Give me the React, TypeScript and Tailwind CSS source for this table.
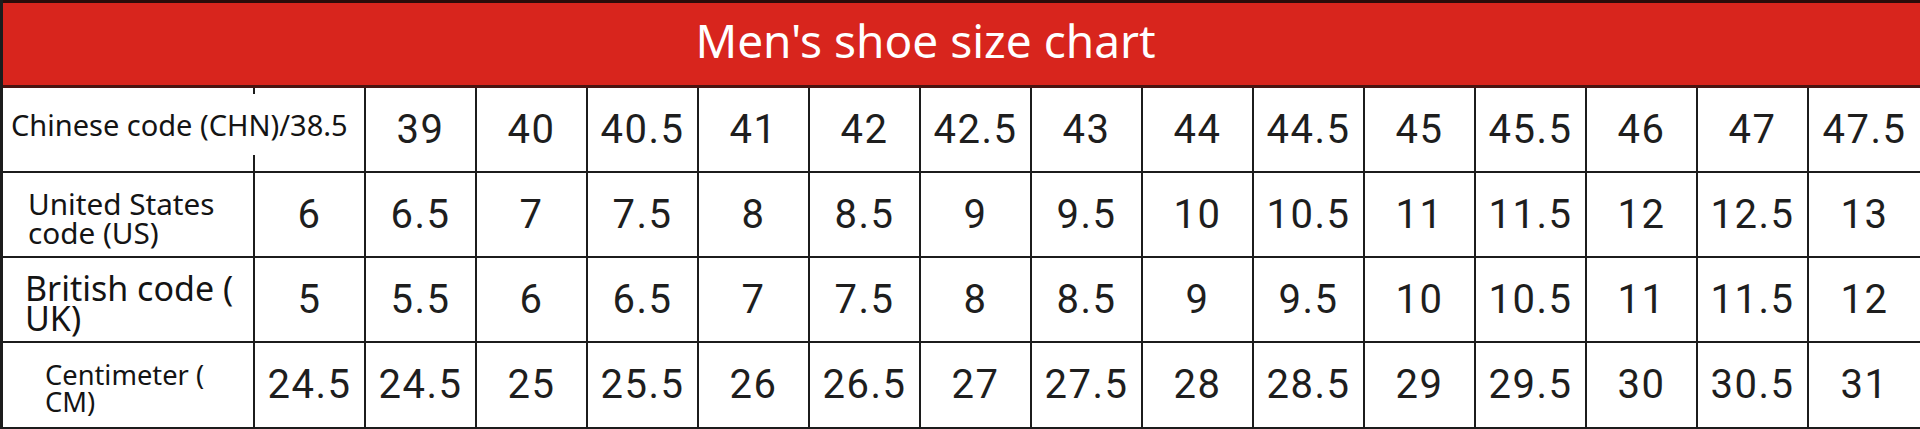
const chn = ["39", "40", "40.5", "41", "42", "42.5", "43", "44", "44.5", "45", "45.5", "46", "47", "47.5"];
const us = ["6", "6.5", "7", "7.5", "8", "8.5", "9", "9.5", "10", "10.5", "11", "11.5", "12", "12.5", "13"];
const uk = ["5", "5.5", "6", "6.5", "7", "7.5", "8", "8.5", "9", "9.5", "10", "10.5", "11", "11.5", "12"];
const cm = ["24.5", "24.5", "25", "25.5", "26", "26.5", "27", "27.5", "28", "28.5", "29", "29.5", "30", "30.5", "31"];

function Cell({ value, last }: { value: string; last: boolean }) {
  return (
    <div
      className={`flex items-center justify-center border-[#1c1c1c] font-['Roboto',sans-serif] text-[40px] tracking-[1.5px] text-[#1e1e1e] ${
        last ? "" : "border-r-2"
      }`}
    >
      {value}
    </div>
  );
}

function Row({
  label,
  values,
  height,
  lead,
}: {
  label: React.ReactNode;
  values: string[];
  height: string;
  lead?: boolean;
}) {
  return (
    <div className={`grid grid-cols-[252px_repeat(15,minmax(0,1fr))] border-b-2 border-[#1c1c1c] ${height}`}>
      {label}
      {lead && <div className="border-r-2 border-[#1c1c1c]" />}
      {values.map((v, i) => (
        <Cell key={i} value={v} last={i === values.length - 1} />
      ))}
    </div>
  );
}

export default function App() {
  return (
    <div className="flex h-[429px] w-[1920px] flex-col overflow-hidden border-l-[3px] border-[#1c1c1c] bg-white font-['Noto_Sans',sans-serif]">
      <header className="flex h-[88px] shrink-0 items-center justify-center border-t-[3px] border-b-[3px] border-t-[#2a0c0a] border-b-[#4a1411] bg-[#d8251d] pr-[72px] pb-[9px]">
        <h1 className="text-[46px] leading-none font-normal text-white">Men's shoe size chart</h1>
      </header>

      <Row
        height="h-[85px]"
        lead
        values={chn}
        label={
          <div className="flex items-center border-r-2 border-[#1c1c1c] pb-[10px] pl-2">
            <span className="relative z-10 bg-white py-4 whitespace-nowrap text-[29px] leading-none text-[#141414]">
              Chinese code (CHN)/38.5
            </span>
          </div>
        }
      />
      <Row
        height="h-[85px]"
        values={us}
        label={
          <div className="flex items-center border-r-2 border-[#1c1c1c] pt-[6px] pl-[25px] text-[29.7px] leading-[29px] text-[#141414]">
            <span>
              United States
              <br />
              code (US)
            </span>
          </div>
        }
      />
      <Row
        height="h-[85px]"
        values={uk}
        label={
          <div className="flex items-center border-r-2 border-[#1c1c1c] pt-[6px] pl-[22px] text-[34px] leading-[30px] text-[#141414]">
            <span>
              British code (
              <br />
              UK)
            </span>
          </div>
        }
      />
      <Row
        height="h-[86px]"
        values={cm}
        label={
          <div className="flex items-center border-r-2 border-[#1c1c1c] pt-[6px] pl-[42px] text-[27.3px] leading-[27px] text-[#141414]">
            <span>
              Centimeter (
              <br />
              CM)
            </span>
          </div>
        }
      />
    </div>
  );
}
